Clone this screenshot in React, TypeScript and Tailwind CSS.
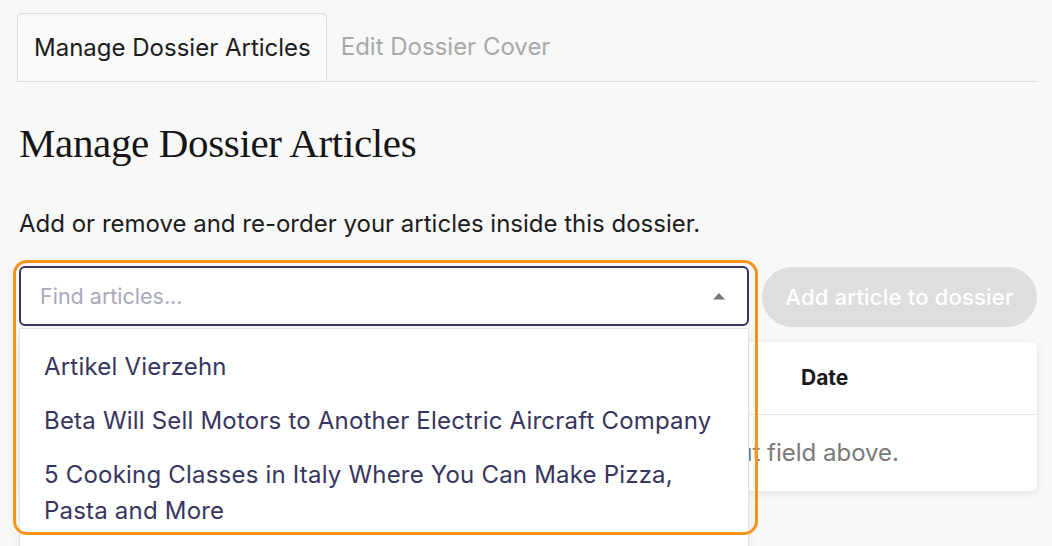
import React from "react";

const ITEMS = [
  "Artikel Vierzehn",
  "Beta Will Sell Motors to Another Electric Aircraft Company",
  "5 Cooking Classes in Italy Where You Can Make Pizza, Pasta and More",
];

export default function App() {
  return (
    <div className="min-h-[546px] overflow-hidden bg-[#f8f8f8] pl-[19px] pr-[15px] font-['Inter',sans-serif] text-[#1a1a1a]">
      {/* tabs */}
      <div className="flex border-b border-[#dcdcdc] pt-[13px] -ml-[2px]">
        <div className="flex h-[68px] items-center rounded-t-[5px] border border-b-0 border-[#dcdcdc] bg-[#f9f9f9] pl-[16px] pr-[15px] text-[24px] text-[#1c1c1c]">
          Manage Dossier Articles
        </div>
        <div className="flex h-[68px] items-center px-[14px] text-[24px] text-[#a9a9a9]">
          Edit Dossier Cover
        </div>
      </div>

      <h1 className="mt-[37px] font-['Liberation_Serif',serif] text-[41px] leading-[48px] tracking-[-0.35px] text-[#151515]">
        Manage Dossier Articles
      </h1>

      <p className="mt-[43px] text-[24px] leading-[28px] text-[#1c1c1c]">
        Add or remove and re-order your articles inside this dossier.
      </p>

      <div className="mt-[28px] flex gap-[13px]">
        <div className="relative z-10 w-[730px] shrink-0">
          <div className="flex h-[60px] items-center rounded-[6px] border-2 border-[#37355e] bg-white pl-[19px] pr-[21px]">
            <span className="flex-1 text-[21.5px] text-[#a9a8bc]">Find articles...</span>
            <svg width="14" height="8" viewBox="0 0 14 8" aria-hidden>
              <path d="M1 7.5L7 1l6 6.5z" fill="#777" />
            </svg>
          </div>

          {/* dropdown */}
          <div className="absolute left-0 top-[62px] w-[730px] border border-[#e3e3e3] bg-white pb-[60px] pl-[24px] pr-[24px] pt-[20px] shadow-[0_4px_10px_rgba(0,0,0,0.06)]">
            <ul className="flex flex-col gap-[18px]">
              {ITEMS.map((t) => (
                <li key={t} className="text-[24px] leading-[36px] tracking-[0.2px] text-[#37355e]">
                  {t}
                </li>
              ))}
            </ul>
          </div>

          {/* focus ring */}
          <div className="pointer-events-none absolute left-[-6px] top-[-6px] h-[275px] w-[745px] rounded-[14px] border-[3px] border-[#f7941d]" />
        </div>

        <button
          type="button"
          className="mt-[1px] h-[60px] w-[275px] shrink-0 rounded-full bg-[#dedede] text-[22px] font-medium tracking-[0.2px] text-white"
        >
          Add article to dossier
        </button>
      </div>

      {/* table */}
      <div className="mt-[15px] rounded-[6px] bg-white shadow-[0_2px_10px_rgba(0,0,0,0.08)]">
        <div className="grid h-[73px] grid-cols-[1fr_236px] items-center border-b border-[#e8e8e8] text-[21px] font-bold">
          <div />
          <div>Date</div>
        </div>
        <div className="flex h-[76px] items-center justify-end pr-[138px] text-[24px] text-[#7a7a7a]">
          input field above.
        </div>
      </div>
    </div>
  );
}
